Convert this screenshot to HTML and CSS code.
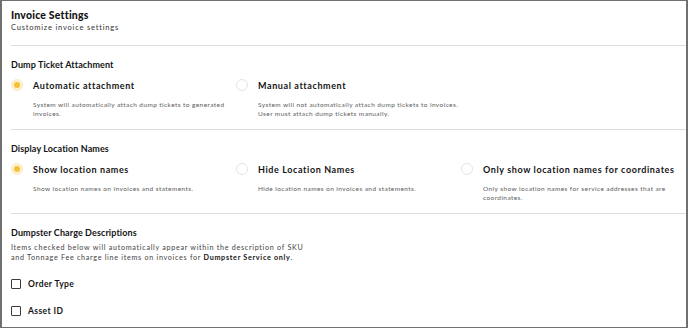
FILE: index.html
```html
<!DOCTYPE html>
<html lang="en">

<head>
    <meta charset="UTF-8">
    <meta name="viewport" content="width=device-width, initial-scale=1.0">
    <title>Invoice Settings</title>
    <link rel="stylesheet" href="styles.css">
</head>

<body>
    <div class="frame">
        <div class="header">
            <h1>Invoice Settings</h1>
            <p>Customize invoice settings</p>
        </div>

        <div class="section">
            <h2>Dump Ticket Attachment</h2>
            <div class="options">
                <div class="option">
                    <div class="choice">
                        <span class="radio checked"></span>
                        <span class="label">Automatic attachment</span>
                    </div>
                    <p class="desc">System will automatically attach dump tickets to generated<br>invoices.</p>
                </div>
                <div class="option">
                    <div class="choice">
                        <span class="radio"></span>
                        <span class="label">Manual attachment</span>
                    </div>
                    <p class="desc">System will not automatically attach dump tickets to invoices.<br>User must attach dump tickets manually.</p>
                </div>
            </div>
        </div>

        <div class="section">
            <h2>Display Location Names</h2>
            <div class="options">
                <div class="option">
                    <div class="choice">
                        <span class="radio checked"></span>
                        <span class="label">Show location names</span>
                    </div>
                    <p class="desc">Show location names on invoices and statements.</p>
                </div>
                <div class="option">
                    <div class="choice">
                        <span class="radio"></span>
                        <span class="label">Hide Location Names</span>
                    </div>
                    <p class="desc">Hide location names on invoices and statements.</p>
                </div>
                <div class="option">
                    <div class="choice">
                        <span class="radio"></span>
                        <span class="label">Only show location names for coordinates</span>
                    </div>
                    <p class="desc">Only show location names for service addresses that are<br>coordinates.</p>
                </div>
            </div>
        </div>

        <div class="section last">
            <h2>Dumpster Charge Descriptions</h2>
            <p class="note">Items checked below will automatically appear within the description of SKU<br>and Tonnage Fee charge line items on invoices for <b>Dumpster Service only</b>.</p>
            <div class="checks">
                <div class="check">
                    <span class="box"></span>
                    <span class="label">Order Type</span>
                </div>
                <div class="check">
                    <span class="box"></span>
                    <span class="label">Asset ID</span>
                </div>
            </div>
        </div>
    </div>
</body>

</html>
```

FILE: styles.css
```css
/*General*/
* {
    margin: 0;
    padding: 0;
    box-sizing: border-box;
}

html {
    font-family: 'Lato', 'Liberation Sans', sans-serif;
}

body {
    background-color: #fff;
    color: #141414;
}

/*Frame*/
.frame {
    width: 688px;
    height: 328px;
    overflow: hidden;
    border: 1px solid #707070;
    border-left-width: 2px;
    border-right-width: 2px;
    padding-left: 9px;
}

/*Header*/
.header {
    padding-top: 7px;
    padding-bottom: 12px;
}

.header h1 {
    font-size: 10.5px;
    line-height: 14px;
    font-weight: 900;
    letter-spacing: 0.2px;
}

.header p {
    margin-top: 1px;
    font-size: 7.5px;
    line-height: 10px;
    letter-spacing: 0.8px;
    color: #333;
}

/*Sections*/
.section {
    border-top: 1px solid #dcdde3;
    padding: 12px 0 11px 0;
}

.section h2 {
    font-size: 9px;
    line-height: 14px;
    font-weight: 700;
    letter-spacing: 0.1px;
}

.options {
    display: grid;
    grid-template-columns: 225px 225px 225px;
    margin-top: 6px;
}

.choice {
    display: flex;
    align-items: center;
    gap: 10px;
    height: 14px;
}

.label {
    font-size: 9px;
    font-weight: 700;
    letter-spacing: 0.6px;
}

.radio {
    width: 12px;
    height: 12px;
    border-radius: 50%;
    border: 1px solid #e4e4e4;
    background-color: #fff;
    display: flex;
    align-items: center;
    justify-content: center;
}

.radio.checked {
    border-color: #fbecc3;
    background-color: #fdf0cd;
}

.radio.checked::after {
    content: '';
    width: 6px;
    height: 6px;
    border-radius: 50%;
    background-color: #f3c13a;
}

.desc {
    margin-top: 8px;
    margin-left: 22px;
    font-size: 6.5px;
    line-height: 9px;
    letter-spacing: 0.42px;
    color: #5c5c5c;
}

/*Checkboxes*/
.note {
    margin-top: 3px;
    font-size: 7.2px;
    line-height: 10px;
    letter-spacing: 0.7px;
    color: #444;
}

.note b {
    color: #141414;
}

.checks {
    display: flex;
    flex-direction: column;
    gap: 13px;
    margin-top: 14px;
}

.check {
    display: flex;
    align-items: center;
    gap: 7px;
    height: 14px;
}

.box {
    width: 10px;
    height: 10px;
    border: 1.3px solid #3a3a3a;
    border-radius: 1px;
}

.check .label {
    font-size: 8.5px;
    letter-spacing: 0.4px;
}
```
